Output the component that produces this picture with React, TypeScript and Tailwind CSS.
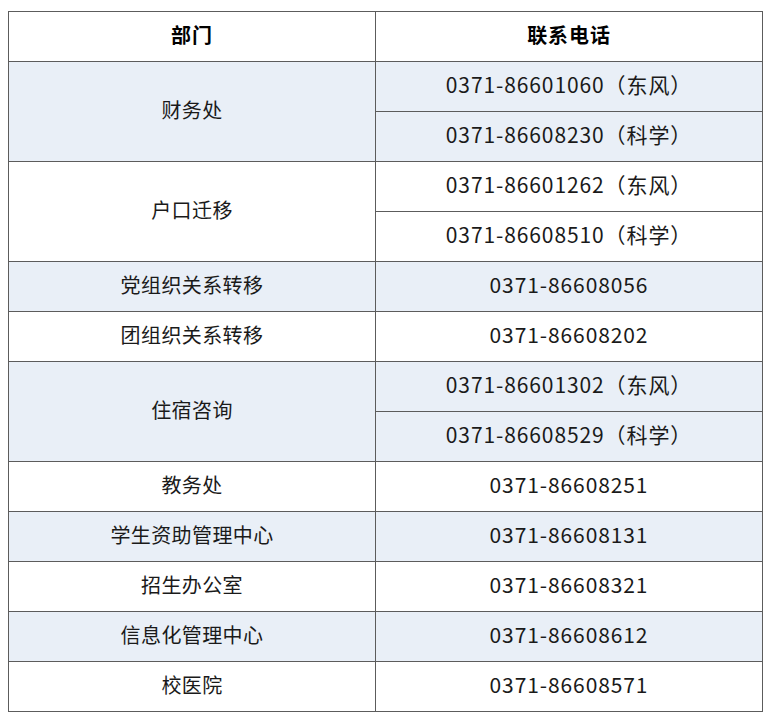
const BLUE = "bg-[#e9eff7]";

type Row = { dept: string; phones: string[]; blue: boolean };

const ROWS: Row[] = [
  { dept: "财务处", phones: ["0371-86601060（东风）", "0371-86608230（科学）"], blue: true },
  { dept: "户口迁移", phones: ["0371-86601262（东风）", "0371-86608510（科学）"], blue: false },
  { dept: "党组织关系转移", phones: ["0371-86608056"], blue: true },
  { dept: "团组织关系转移", phones: ["0371-86608202"], blue: false },
  { dept: "住宿咨询", phones: ["0371-86601302（东风）", "0371-86608529（科学）"], blue: true },
  { dept: "教务处", phones: ["0371-86608251"], blue: false },
  { dept: "学生资助管理中心", phones: ["0371-86608131"], blue: true },
  { dept: "招生办公室", phones: ["0371-86608321"], blue: false },
  { dept: "信息化管理中心", phones: ["0371-86608612"], blue: true },
  { dept: "校医院", phones: ["0371-86608571"], blue: false },
];

const cell = "border border-[#5c5c5c] text-center align-middle p-0 pb-[3px]";

export default function App() {
  return (
    <div
      className="w-[773px] h-[716px] bg-white pt-[11px] pl-[8px]"
      style={{ fontFamily: '"Noto Sans CJK SC", "Noto Sans", sans-serif' }}
    >
      <table className="border-collapse w-[754px] table-fixed text-[21px] tracking-[0.9px] text-[#1a1a1a]">
        <colgroup>
          <col className="w-[367px]" />
          <col className="w-[387px]" />
        </colgroup>
        <thead>
          <tr className="h-[50px]">
            <th className={`${cell} font-bold text-[20px] text-black`}>部门</th>
            <th className={`${cell} font-bold text-[20px] text-black`}>联系电话</th>
          </tr>
        </thead>
        <tbody>
          {ROWS.map((r) =>
            r.phones.map((p, i) => (
              <tr key={r.dept + i} className={`h-[50px] ${r.blue ? BLUE : "bg-white"}`}>
                {i === 0 && (
                  <td className={`${cell} text-[20px] tracking-[0.4px]`} rowSpan={r.phones.length}>
                    {r.dept}
                  </td>
                )}
                <td className={cell}>{p}</td>
              </tr>
            ))
          )}
        </tbody>
      </table>
    </div>
  );
}
